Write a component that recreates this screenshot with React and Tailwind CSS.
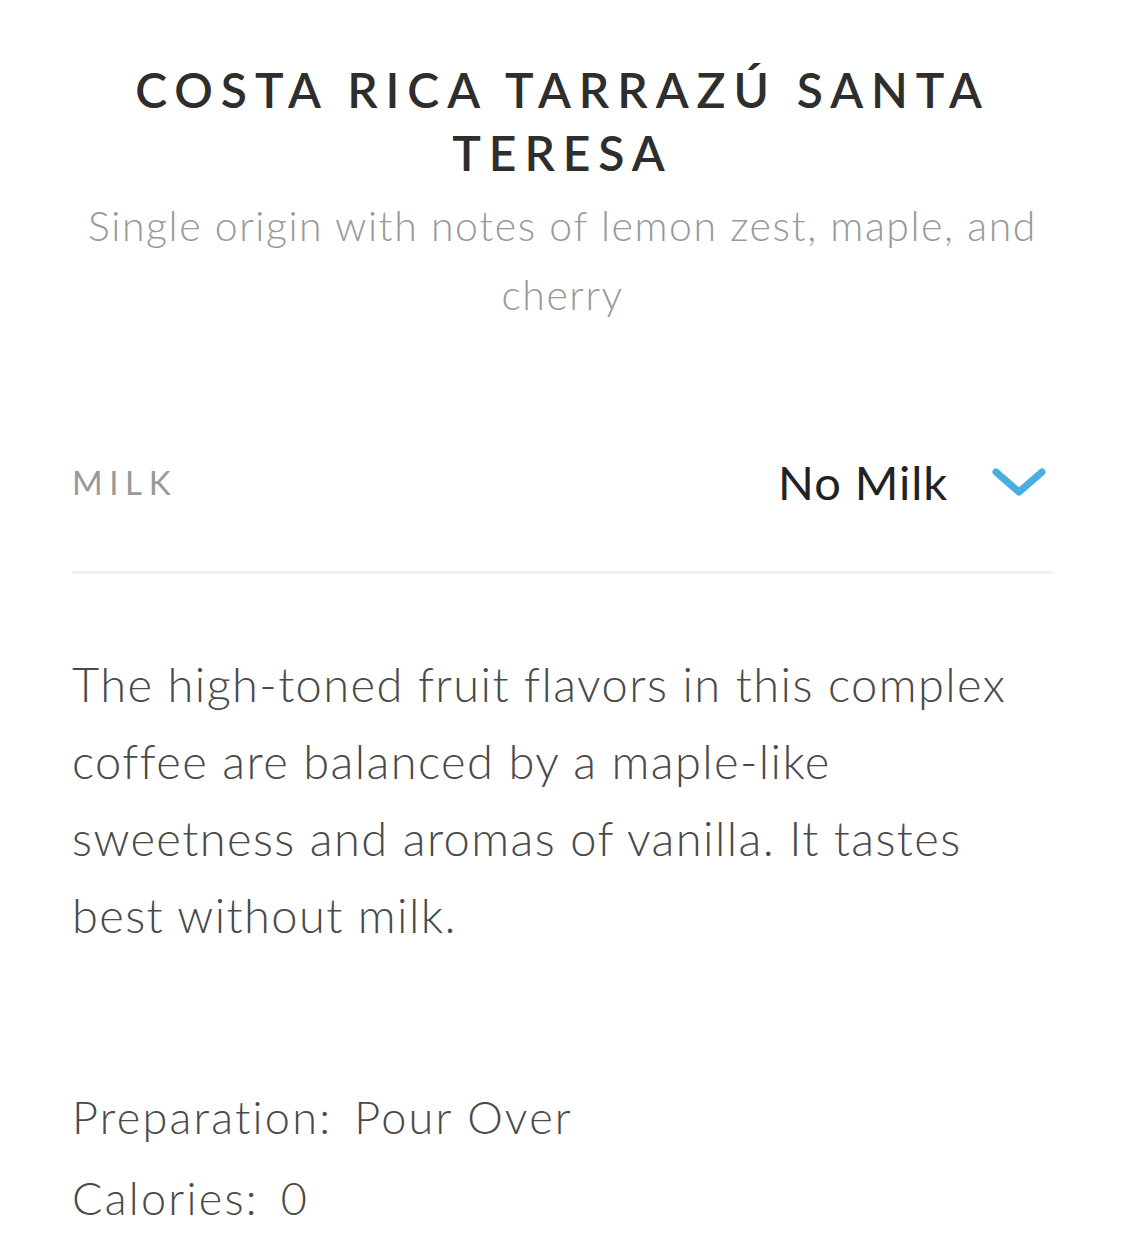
export default function App() {
  return (
    <div
      className="min-h-screen bg-white px-[72px] pt-[58px] pb-10 text-[#444]"
      style={{ fontFamily: "Lato, 'Noto Sans', sans-serif" }}
    >
      <div className="text-center">
        <h1 className="px-[10px] text-[48px] font-semibold uppercase leading-[63px] tracking-[0.165em] text-[#2e2e2e]">
          Costa Rica Tarrazú Santa Teresa
        </h1>
        <p className="mt-[7px] text-[41px] font-light leading-[69px] tracking-[0.038em] text-[#999]">
          Single origin with notes of lemon zest, maple, and cherry
        </p>
      </div>

      <div className="mt-[118px] flex items-center justify-between border-b-[3px] border-[#f0f0f0] pb-[53px]">
        <span className="text-[33px] uppercase tracking-[0.2em] text-[#999]">Milk</span>
        <div className="flex items-center">
          <span className="text-[47px] tracking-[0.02em] text-[#222]">No Milk</span>
          <svg className="ml-[44px] mr-[7px]" width="54" height="30" viewBox="0 0 54 30" fill="none">
            <path d="M4 5 L27 25 L50 5" stroke="#4aaee0" strokeWidth="7" strokeLinecap="round" strokeLinejoin="round" />
          </svg>
        </div>
      </div>

      <p className="mt-[72px] text-[47px] font-light leading-[77px] tracking-[0.03em] text-[#4a4a4a]">
        The high-toned fruit flavors in this complex coffee are balanced by a maple-like sweetness and aromas of vanilla. It tastes best without milk.
      </p>

      <div className="mt-[123px] text-[45px] font-light leading-[81px] tracking-[0.05em] text-[#4a4a4a]">
        <div>
          Preparation:<span className="ml-[22px]">Pour Over</span>
        </div>
        <div>
          Calories:<span className="ml-[22px]">0</span>
        </div>
      </div>
    </div>
  );
}
